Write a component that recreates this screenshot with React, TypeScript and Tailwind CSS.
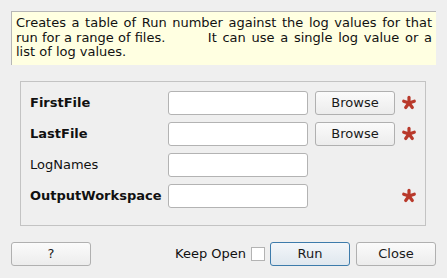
import React from "react";

function Star() {
  return (
    <svg width="16" height="16" viewBox="-8 -8 16 16" className="block">
      <g stroke="#b9392b" strokeWidth="3.2" strokeLinecap="round">
        <line x1="0" y1="0" x2="0" y2="-5.6" />
        <line x1="0" y1="0" x2="5.3" y2="-1.75" />
        <line x1="0" y1="0" x2="3.3" y2="4.5" />
        <line x1="0" y1="0" x2="-3.3" y2="4.5" />
        <line x1="0" y1="0" x2="-5.3" y2="-1.75" />
      </g>
    </svg>
  );
}

const inputCls =
  "w-[140px] h-[24px] bg-white border border-[#b3b3b3] rounded-[3px] shrink-0";
const btnCls =
  "h-[24px] w-[80px] shrink-0 flex items-center justify-center border border-[#b0b0b0] rounded-[3px] bg-gradient-to-b from-[#fbfbfb] to-[#ececec] text-[#1a1a1a]";

function Row({
  label,
  bold,
  browse,
  star,
}: {
  label: string;
  bold?: boolean;
  browse?: boolean;
  star?: boolean;
}) {
  return (
    <div className="flex items-center h-[24px]">
      <div className={"w-[138px] shrink-0 " + (bold ? "font-bold" : "")}>{label}</div>
      <div className={inputCls} />
      {browse ? (
        <div className={btnCls + " ml-[7px]"}>Browse</div>
      ) : (
        <div className="w-[80px] ml-[7px] shrink-0" />
      )}
      <div className="ml-[6px] w-[16px] h-[16px]">{star ? <Star /> : null}</div>
    </div>
  );
}

export default function App() {
  return (
    <div className="w-[447px] h-[278px] bg-[#efefef] pt-[11px] pl-[11px] flex flex-col font-['DejaVu_Sans',sans-serif] text-[13px] text-[#111] overflow-hidden">
      <div className="w-[425px] h-[54px] border-t border-l border-[#b6b6b6] bg-[#ffffe1] pl-[4px] pr-[4px] pt-[4px] leading-[14.5px] shrink-0">
        <div className="text-justify [text-align-last:justify]">
          Creates a table of Run number against the log values for that
        </div>
        <div className="flex justify-between">
          <span>run for a range of files.</span>
          <span className="[word-spacing:1.6px]">It can use a single log value or a</span>
        </div>
        <div>list of log values.</div>
      </div>
      <div className="mt-[16px] ml-[9px] w-[406px] h-[145px] border border-[#c3c3c3] pt-[9px] pl-[9px] flex flex-col gap-[7px] shrink-0">
        <Row label="FirstFile" bold browse star />
        <Row label="LastFile" bold browse star />
        <Row label="LogNames" />
        <Row label="OutputWorkspace" bold star />
      </div>
      <div className="mt-[16px] flex items-center h-[24px] w-[425px]">
        <div className={btnCls}>?</div>
        <div className="ml-auto">Keep Open</div>
        <div className="ml-[5px] w-[14px] h-[14px] bg-white border border-[#b3b3b3]" />
        <div className="ml-[5px] h-[24px] w-[80px] flex items-center justify-center border border-[#3d7bab] rounded-[3px] bg-gradient-to-b from-[#f3f6f9] to-[#dfe7ee] text-[#1a1a1a]">
          Run
        </div>
        <div className={btnCls + " ml-[6px]"}>Close</div>
      </div>
    </div>
  );
}
